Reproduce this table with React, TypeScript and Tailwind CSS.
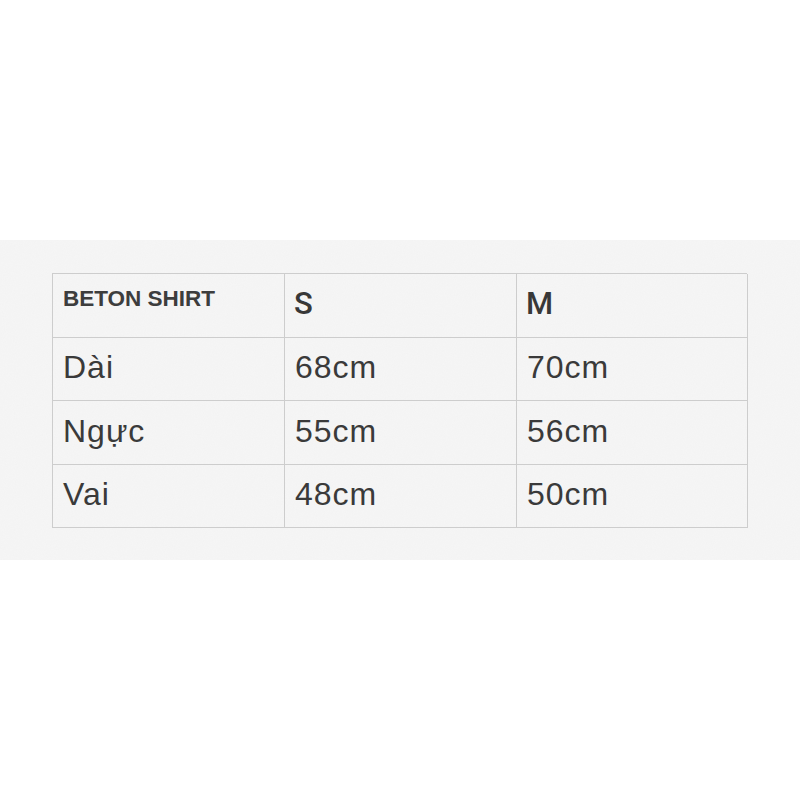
import React from "react";

const rows = [
  ["Dài", "68cm", "70cm"],
  ["Ngực", "55cm", "56cm"],
  ["Vai", "48cm", "50cm"],
];

export default function App() {
  return (
    <div className="w-[800px] h-[800px] bg-white flex flex-col" style={{ fontFamily: '"Liberation Sans", Arial, sans-serif' }}>
      <div className="h-[240px]" />
      <div className="relative h-[320px] bg-[#f6f6f6] pt-[33px] pl-[52px]">
        <svg className="absolute inset-0 w-full h-full pointer-events-none" aria-hidden>
          <filter id="n">
            <feTurbulence type="fractalNoise" baseFrequency="0.9" numOctaves="3" stitchTiles="stitch" />
            <feColorMatrix type="matrix" values="0 0 0 0 0.5  0 0 0 0 0.5  0 0 0 0 0.5  0 0 0 0.06 0" />
          </filter>
          <rect width="100%" height="100%" filter="url(#n)" />
        </svg>
        <div className="relative w-[695px] grid grid-cols-[232px_232px_231px] border-l border-t border-[#cdcdcd] text-[#3a3a3a]">
          <div className="h-[64px] border-r border-b border-[#cdcdcd] pl-[10px] pt-[12px] text-[22.5px] font-bold leading-[26px] text-[#3d3d3d]">BETON SHIRT</div>
          <div className="h-[64px] border-r border-b border-[#cdcdcd] pl-[9px] flex items-center text-[31px] font-medium pb-[2px] text-[#383838]" style={{ fontFamily: 'Roboto, "Liberation Sans", sans-serif' }}>S</div>
          <div className="h-[64px] border-r border-b border-[#cdcdcd] pl-[9px] flex items-center text-[31px] font-medium pb-[2px] text-[#383838]" style={{ fontFamily: 'Roboto, "Liberation Sans", sans-serif' }}>M</div>
          {rows.map((r, i) => (
            <React.Fragment key={i}>
              {r.map((c, j) => (
                <div key={j} className={`${i === 1 ? "h-[64px]" : "h-[63px]"} border-r border-b border-[#cdcdcd] pl-[10px] flex items-center text-[32px] tracking-[1px] pb-[4px]`}>
                  {c}
                </div>
              ))}
            </React.Fragment>
          ))}
        </div>
      </div>
      <div className="flex-1" />
    </div>
  );
}
